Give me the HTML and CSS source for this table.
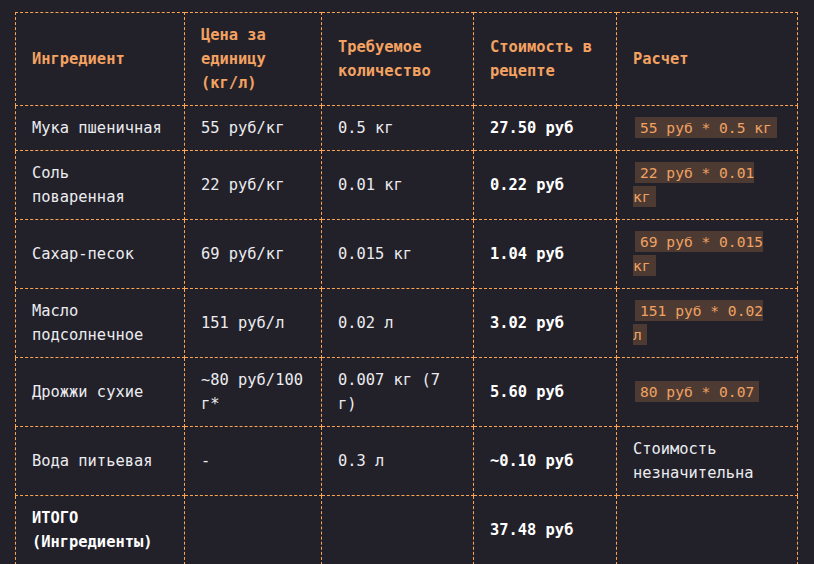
FILE: index.html
```html
<!DOCTYPE html>
<html lang="ru">
<head>
<meta charset="utf-8">
<title>Стоимость ингредиентов</title>
<link rel="stylesheet" href="styles.css">
</head>
<body>
<div class="wrap">
<table class="cost">
  <colgroup>
    <col class="c1"><col class="c2"><col class="c3"><col class="c4"><col class="c5">
  </colgroup>
  <thead>
    <tr>
      <th>Ингредиент</th>
      <th>Цена за единицу (кг/л)</th>
      <th>Требуемое количество</th>
      <th>Стоимость в рецепте</th>
      <th>Расчет</th>
    </tr>
  </thead>
  <tbody>
    <tr>
      <td>Мука пшеничная</td>
      <td>55 руб/кг</td>
      <td>0.5 кг</td>
      <td><strong>27.50 руб</strong></td>
      <td><code>55 руб * 0.5 кг</code></td>
    </tr>
    <tr>
      <td>Соль поваренная</td>
      <td>22 руб/кг</td>
      <td>0.01 кг</td>
      <td><strong>0.22 руб</strong></td>
      <td><code>22 руб * 0.01 кг</code></td>
    </tr>
    <tr>
      <td>Сахар-песок</td>
      <td>69 руб/кг</td>
      <td>0.015 кг</td>
      <td><strong>1.04 руб</strong></td>
      <td><code>69 руб * 0.015 кг</code></td>
    </tr>
    <tr>
      <td>Масло подсолнечное</td>
      <td>151 руб/л</td>
      <td>0.02 л</td>
      <td><strong>3.02 руб</strong></td>
      <td><code>151 руб * 0.02 л</code></td>
    </tr>
    <tr>
      <td>Дрожжи сухие</td>
      <td>~80 руб/100 г*</td>
      <td>0.007 кг (7 г)</td>
      <td><strong>5.60 руб</strong></td>
      <td><code>80 руб * 0.07</code></td>
    </tr>
    <tr>
      <td>Вода питьевая</td>
      <td>-</td>
      <td>0.3 л</td>
      <td><strong>~0.10 руб</strong></td>
      <td>Стоимость незначительна</td>
    </tr>
    <tr>
      <td><strong>ИТОГО (Ингредиенты)</strong></td>
      <td></td>
      <td></td>
      <td><strong>37.48 руб</strong></td>
      <td></td>
    </tr>
  </tbody>
</table>
</div>
</body>
</html>
```

FILE: styles.css
```css
html, body {
  margin: 0;
  padding: 0;
  background: #22212a;
}
body {
  font-family: "DejaVu Sans Mono", "Liberation Mono", monospace;
  font-size: 15.4px;
  line-height: 24px;
  color: #ececf0;
}
.wrap {
  padding: 12px 17px 0 15px;
}
.cost {
  width: 782px;
  border-collapse: collapse;
  table-layout: fixed;
}
.c1 { width: 169px; }
.c2 { width: 137px; }
.c3 { width: 152px; }
.c4 { width: 143px; }
.c5 { width: 181px; }
.cost th,
.cost td {
  border: 1px dashed #ffa452;
  padding: 10px 16px;
  text-align: left;
  vertical-align: middle;
  overflow-wrap: break-word;
}
.cost th {
  color: #f4a261;
  font-weight: bold;
}
.cost strong {
  color: #ffffff;
  font-weight: bold;
}
.cost code {
  font-family: "DejaVu Sans Mono", "Liberation Mono", monospace;
  font-size: 14.6px;
  background: #4d3b33;
  color: #f0a262;
  padding: 2px 5px;
  margin-left: 2px;
}
```
